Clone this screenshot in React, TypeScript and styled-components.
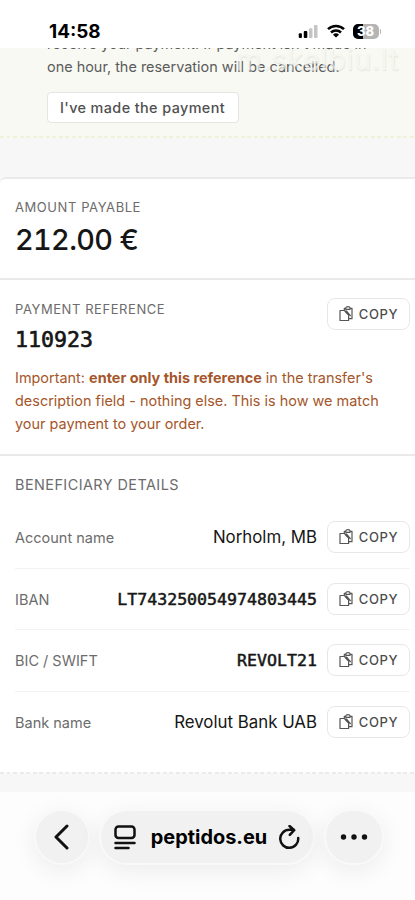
import React from 'react';
import styled, { createGlobalStyle } from 'styled-components';

const Global = createGlobalStyle`
  * { box-sizing: border-box; }
  body { margin: 0; background: #f7f7f7; font-family: Inter, sans-serif; -webkit-font-smoothing: antialiased; }
`;

const Screen = styled.div`
  display: flex;
  flex-direction: column;
  width: 415px;
  height: 900px;
  overflow: hidden;
  background: #f7f7f7;
`;

const StatusBar = styled.header`
  flex: none;
  display: flex;
  justify-content: space-between;
  align-items: center;
  height: 48px;
  padding: 14px 34px 0 49px;
  background: #fff;
`;

const Clock = styled.time`
  font-size: 18.9px;
  font-weight: 700;
  color: #000;
`;

const StatusIcons = styled.div`
  display: flex;
  align-items: center;
  gap: 8px;
`;

const Notice = styled.section`
  position: relative;
  flex: none;
  height: 88px;
  overflow: hidden;
  padding: 0 20px 0 47px;
  background: #f8f9f3;
`;

const DashedRule = styled.div<{ $color: string; $gap: string }>`
  flex: none;
  height: 2px;
  background: repeating-linear-gradient(90deg, ${(p) => p.$color} 0 4px, ${(p) => p.$gap} 4px 6.5px);
`;

const NoticeText = styled.p`
  margin: -16px 0 14px;
  font-size: 14.45px;
  line-height: 23px;
  white-space: nowrap;
  color: #5b5b5b;
`;

const Watermark = styled.span`
  position: absolute;
  top: -6px;
  right: 16px;
  font-size: 29px;
  line-height: 36px;
  letter-spacing: 0.6px;
  color: #f5f6f0;
  text-shadow: 0.5px 0.5px 1px #d9dad4;
  opacity: 0.7;
`;

const ConfirmButton = styled.button`
  display: block;
  height: 31px;
  width: 192px;
  padding: 0 1px 0 0;
  border: 1.5px solid #e5e5e2;
  border-radius: 4px;
  background: #fff;
  font: 500 14.4px Inter, sans-serif;
  letter-spacing: 0.4px;
  color: #505050;
`;

const Card = styled.main`
  flex: none;
  height: 595px;
  margin-top: 39px;
  border-top: 2px solid #eaeaea;
  border-top-left-radius: 6px;
  background: #fff;
`;

const Section = styled.section<{ $height: number; $top: number }>`
  height: ${(p) => p.$height}px;
  padding: ${(p) => p.$top}px 5px 0 15px;
  border-bottom: 2px solid #e9e9e9;
  &:last-child { border-bottom: 0; }
`;

const Label = styled.h2<{ $large?: boolean }>`
  margin: 0;
  font-size: ${(p) => (p.$large ? 14.4 : 13)}px;
  font-weight: 400;
  line-height: 20px;
  letter-spacing: ${(p) => (p.$large ? 0.46 : 0.57)}px;
  color: #6c6c6c;
`;

const Amount = styled.div`
  margin-top: 5px;
  font-size: 28.8px;
  font-weight: 500;
  line-height: 36px;
  letter-spacing: -0.6px;
  font-feature-settings: 'tnum';
  color: #161616;
`;

const Split = styled.div`
  display: flex;
  justify-content: space-between;
  align-items: flex-start;
`;

const ReferenceBlock = styled.div`
  padding-top: 1px;
`;

const Reference = styled.div`
  margin-top: 7px;
  font: 21.6px/28px 'DejaVu Sans Mono', monospace;
  -webkit-text-stroke: 0.65px #161616;
  color: #161616;
`;

const Warning = styled.p`
  margin: 12px 0 0;
  font-size: 14.45px;
  line-height: 23px;
  white-space: nowrap;
  color: #a5562a;
  strong { font-weight: 650; }
`;

const CopyButton = styled.button`
  flex: none;
  display: flex;
  align-items: center;
  justify-content: center;
  gap: 6px;
  width: 83px;
  height: 32px;
  padding: 0;
  border: 1.5px solid #e7e7e7;
  border-radius: 8px;
  background: #fff;
  font: 450 13px Inter, sans-serif;
  letter-spacing: 0.65px;
  color: #4c4c4c;
`;

const Rows = styled.dl`
  margin: 12px 0 0;
`;

const Row = styled.div`
  display: flex;
  align-items: center;
  height: 61.5px;
  gap: 10px;
  border-bottom: 1px solid #f3f3f3;
  &:last-child { border-bottom: 0; }
`;

const Term = styled.dt`
  padding-top: 1px;
  font-size: 14.5px;
  color: #6c6c6c;
`;

const Value = styled.dd<{ $mono?: boolean }>`
  flex: 1;
  margin: 0;
  text-align: right;
  white-space: nowrap;
  color: #161616;
  padding-top: ${(p) => (p.$mono ? 1 : 0)}px;
  font-family: ${(p) => (p.$mono ? "'DejaVu Sans Mono', monospace" : 'Inter, sans-serif')};
  font-size: ${(p) => (p.$mono ? 16.6 : 16.85)}px;
  -webkit-text-stroke: ${(p) => (p.$mono ? '0.5px #161616' : '0')};
`;

const BrowserBar = styled.nav`
  flex: 1;
  display: flex;
  justify-content: center;
  align-items: flex-start;
  gap: 9px;
  margin-top: 18px;
  padding: 17px 0 0 3px;
  background: #fdfdfd;
`;

const Pill = styled.div<{ $width: number }>`
  display: flex;
  align-items: center;
  justify-content: center;
  gap: 12px;
  width: ${(p) => p.$width}px;
  height: 56px;
  border: 2px solid #f9f9f9;
  border-radius: 28px;
  background: #f1f1f1;
  box-shadow: 0 6px 24px rgba(0, 0, 0, 0.07);
  color: #111;
`;

const Address = styled.span`
  margin-left: 3px;
  font-size: 19.9px;
  font-weight: 650;
  color: #000;
`;

const Signal = () => (
  <svg width="21" height="13" viewBox="0 0 21 14">
    <rect x="0" y="9" width="3.4" height="5" rx="1" fill="#000" />
    <rect x="5.4" y="6.5" width="3.8" height="7.5" rx="1" fill="#000" />
    <rect x="11" y="3.5" width="3.8" height="10.5" rx="1" fill="#c4c4c4" />
    <rect x="16.4" y="0" width="3.8" height="14" rx="1" fill="#c4c4c4" />
  </svg>
);

const Wifi = () => (
  <svg width="18" height="14" viewBox="0 0 18 14" fill="none" stroke="#000" strokeWidth="2.5">
    <path d="M1 5.2a11.5 11.5 0 0 1 16 0M4 8.5a7.2 7.2 0 0 1 10 0" />
    <path d="M9 13.5 6 10.7a4.3 4.3 0 0 1 6 0Z" fill="#000" stroke="none" />
  </svg>
);

const BatteryShell = styled.div`
  display: flex;
  align-items: center;
  gap: 1px;
`;

const BatteryBody = styled.div`
  width: 26px;
  height: 15px;
  border-radius: 5px;
  background: linear-gradient(90deg, #000 10px, #b5b5b5 10px);
  font-size: 13px;
  font-weight: 800;
  line-height: 15px;
  text-align: center;
  color: #fff;
`;

const BatteryTip = styled.div`
  width: 1.5px;
  height: 5px;
  border-radius: 0 2px 2px 0;
  background: #b5b5b5;
`;

const CopyIcon = () => (
  <svg width="14" height="16" viewBox="0 0 14 16" fill="none" stroke="#555" strokeWidth="1.2" strokeLinejoin="round">
    <path d="M5 4.5H1v10h8.6V8.6L5.5 4.5Z" />
    <path d="M5.3 4.5V2.3h1.5M11 2.3h2v10.4H9.6" />
    <path d="M6.8 3.4V2.1c0-1.9 4.2-1.9 4.2 0v1.3ZM6 5l3 3.5M7.2 4.6 11.6 10" />
  </svg>
);

const Copy = () => (
  <CopyButton type="button"><CopyIcon />COPY</CopyButton>
);

const details = [
  { term: 'Account name', value: 'Norholm, MB', mono: false },
  { term: 'IBAN', value: 'LT743250054974803445', mono: true },
  { term: 'BIC / SWIFT', value: 'REVOLT21', mono: true },
  { term: 'Bank name', value: 'Revolut Bank UAB', mono: false },
];

export default function App() {
  return (
    <Screen>
      <Global />
      <StatusBar>
        <Clock>14:58</Clock>
        <StatusIcons>
          <Signal />
          <Wifi />
          <BatteryShell><BatteryBody>38</BatteryBody><BatteryTip /></BatteryShell>
        </StatusIcons>
      </StatusBar>
      <Notice>
        <Watermark>m.skelbiu.lt</Watermark>
        <NoticeText>
          receive your payment. If payment isn't made in<br />
          one hour, the reservation will be cancelled.
        </NoticeText>
        <ConfirmButton type="button">I've made the payment</ConfirmButton>
      </Notice>
      <DashedRule $color="#eff1d9" $gap="#f8f9f3" />
      <Card>
        <Section $height={101} $top={18}>
          <Label>AMOUNT PAYABLE</Label>
          <Amount>212.00 €</Amount>
        </Section>
        <Section $height={176} $top={18}>
          <Split>
            <ReferenceBlock>
              <Label>PAYMENT REFERENCE</Label>
              <Reference>110923</Reference>
            </ReferenceBlock>
            <Copy />
          </Split>
          <Warning>
            Important: <strong>enter only this reference</strong> in the transfer's<br />
            description field - nothing else. This is how we match<br />
            your payment to your order.
          </Warning>
        </Section>
        <Section $height={316} $top={19}>
          <Label $large>BENEFICIARY DETAILS</Label>
          <Rows>
            {details.map((d) => (
              <Row key={d.term}>
                <Term>{d.term}</Term>
                <Value $mono={d.mono}>{d.value}</Value>
                <Copy />
              </Row>
            ))}
          </Rows>
        </Section>
      </Card>
      <DashedRule $color="#ebebeb" $gap="#fafafa" />
      <BrowserBar>
        <Pill $width={56}>
          <svg width="16" height="26" viewBox="0 0 16 26" fill="none" stroke="currentColor" strokeWidth="3" strokeLinecap="round" strokeLinejoin="round"><path d="M13 2 2 13 13 24" /></svg>
        </Pill>
        <Pill $width={216}>
          <svg width="22" height="25" viewBox="0 0 22 25" fill="none" stroke="currentColor" strokeWidth="2.5" strokeLinecap="round"><rect x="1.5" y="1.5" width="19" height="11.5" rx="3" /><path d="M1.5 18h19M1.5 23h13" /></svg>
          <Address>peptidos.eu</Address>
          <svg width="21" height="25" viewBox="0 0 21 25" fill="none" stroke="currentColor" strokeWidth="2.5" strokeLinecap="round" strokeLinejoin="round"><path d="M19.2 13a9 9 0 1 1-9-8.2H15M10.5 1 15.2 5.2l-4.4 4.6" /></svg>
        </Pill>
        <Pill $width={60}>
          <svg width="28" height="6" viewBox="0 0 28 6" fill="currentColor"><circle cx="3.5" cy="3" r="2.7" /><circle cx="14" cy="3" r="2.7" /><circle cx="24.5" cy="3" r="2.7" /></svg>
        </Pill>
      </BrowserBar>
    </Screen>
  );
}
